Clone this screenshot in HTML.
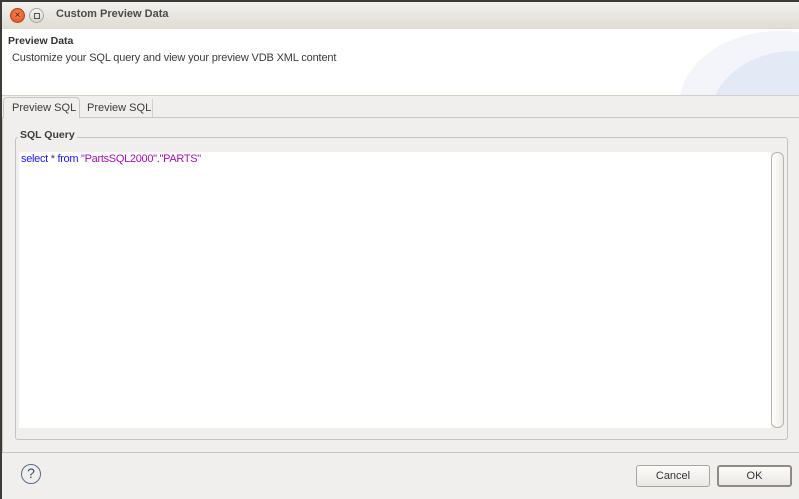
<!DOCTYPE html>
<html><head><style>
*{margin:0;padding:0;box-sizing:border-box}
body{width:799px;height:499px;background:#f0efed;font-family:"Liberation Sans","DejaVu Sans",sans-serif;font-size:11px;color:#3c3c3c;position:relative;overflow:hidden;white-space:nowrap}
.a{position:absolute}
</style></head><body>
<div class="a" style="left:0;top:0;width:799px;height:2px;background:#3c3b37"></div>
<div class="a" style="left:0;top:0;width:2px;height:499px;background:#3c3b37"></div>
<div class="a" style="left:2px;top:2px;width:797px;height:27px;background:linear-gradient(#f3f2ef,#dfdbd2)"></div>
<div class="a" style="left:10px;top:8px;width:15px;height:15px;border-radius:50%;background:radial-gradient(circle at 50% 40%,#f48a5a,#df4a16);border:1px solid #b0481d;color:#4a1a08;font-size:10px;line-height:13px;text-align:center">×</div>
<div class="a" style="left:29px;top:8px;width:15px;height:15px;border-radius:50%;background:linear-gradient(#f6f5f2,#d8d5ce);border:1px solid #aaa69c"><div class="a" style="left:4px;top:4px;width:6px;height:6px;border:1px solid #555"></div></div>
<div class="a" style="left:56px;top:8px;font-weight:bold;font-size:11px;color:#4c4c4c">Custom Preview Data</div>
<div class="a" style="left:2px;top:29px;width:797px;height:66px;background:#fff;overflow:hidden">
<div class="a" style="right:-80px;top:2px;width:200px;height:150px;border-radius:50%;background:#f3f5fb"></div>
<div class="a" style="right:-80px;top:22px;width:170px;height:140px;border-radius:50%;background:#e4e9f6"></div>
<div class="a" style="left:6px;top:6px;font-weight:bold;font-size:10.5px;color:#333">Preview Data</div>
<div class="a" style="left:10px;top:23px;font-size:11px;letter-spacing:-0.15px;color:#3c3c3c">Customize your SQL query and view your preview VDB XML content</div>
</div>
<div class="a" style="left:2px;top:95px;width:797px;height:1px;background:#d3d0ca"></div>
<div class="a" style="left:2px;top:117px;width:797px;height:1px;background:#c9c6c0"></div>
<div class="a" style="left:3px;top:97px;width:77px;height:21px;background:#f0efed;border:1px solid #c9c6c0;border-bottom:none;border-radius:4px 4px 0 0;padding:4px 0 0 8px">Preview SQL</div>
<div class="a" style="left:80px;top:99px;width:73px;height:18px;border-right:1px solid #d3d0ca;padding:3px 0 0 7px">Preview SQL</div>
<div class="a" style="left:2px;top:118px;width:1px;height:334px;background:#c9c6c0"></div>
<div class="a" style="left:15px;top:137px;width:773px;height:303px;border:1px solid #c6c3bd;border-radius:3px"></div>
<div class="a" style="left:18px;top:129px;background:#f0efed;padding:0 2px;font-weight:bold;font-size:10.5px;color:#3c3c3c">SQL Query</div>
<div class="a" style="left:19px;top:152px;width:752px;height:276px;background:#fff"></div>
<div class="a" style="left:21px;top:153px;font-size:11px;letter-spacing:-0.3px"><span style="color:#1a1aff">select</span> * <span style="color:#1a1aff">from</span> <span style="color:#a010b0">"PartsSQL2000"</span>.<span style="color:#a010b0">"PARTS"</span></div>
<div class="a" style="left:771px;top:152px;width:13px;height:276px;background:linear-gradient(90deg,#fff,#eeece8);border:1px solid #b8b5ae;border-radius:6px"></div>
<div class="a" style="left:2px;top:452px;width:797px;height:1px;background:#c9c6c0"></div>
<div class="a" style="left:21px;top:464px;width:20px;height:20px;border-radius:50%;border:1.5px solid #5a6c8a;color:#3b4c6a;font-size:14px;line-height:17px;text-align:center">?</div>
<div class="a" style="left:636px;top:465px;width:74px;height:22px;border:1px solid #a9a59e;border-radius:3px;background:linear-gradient(#fbfbfa,#eae8e4);text-align:center;line-height:20px;color:#333">Cancel</div>
<div class="a" style="left:717px;top:465px;width:75px;height:22px;border:2px solid #8f8b84;border-radius:3px;background:linear-gradient(#fbfbfa,#eae8e4);text-align:center;line-height:18px;color:#333">OK</div>
</body></html>
